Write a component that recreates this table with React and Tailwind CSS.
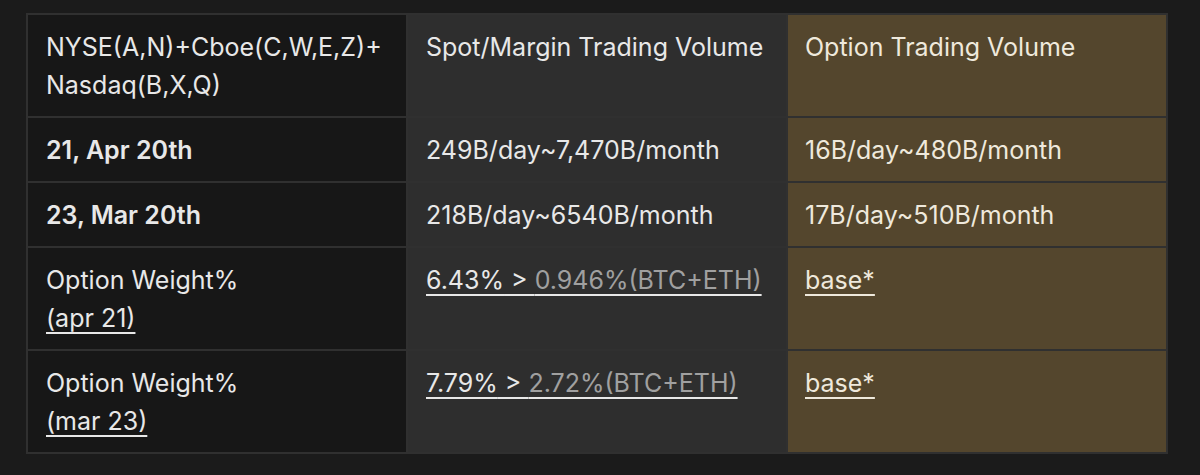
import React from 'react'

const rows = [
  {
    a: <>NYSE(A,N)+Cboe(C,W,E,Z)+<br />Nasdaq(B,X,Q)</>,
    b: 'Spot/Margin Trading Volume',
    c: 'Option Trading Volume',
  },
  {
    a: <span className="font-semibold">21, Apr 20th</span>,
    b: '249B/day~7,470B/month',
    c: '16B/day~480B/month',
  },
  {
    a: <span className="font-semibold">23, Mar 20th</span>,
    b: '218B/day~6540B/month',
    c: '17B/day~510B/month',
  },
  {
    a: <>Option Weight%<br /><span className="underline underline-offset-[5px] decoration-[1.5px]">(apr 21)</span></>,
    b: <Ratio big="6.43%" small="0.946%(BTC+ETH)" />,
    c: <span className="underline underline-offset-[5px] decoration-[1.5px]">base*</span>,
  },
  {
    a: <>Option Weight%<br /><span className="underline underline-offset-[5px] decoration-[1.5px]">(mar 23)</span></>,
    b: <Ratio big="7.79%" small="2.72%(BTC+ETH)" />,
    c: <span className="underline underline-offset-[5px] decoration-[1.5px]">base*</span>,
  },
]

function Ratio({ big, small }) {
  return (
    <span className="underline underline-offset-[5px] decoration-[1.5px]">
      {big} &gt; <span className="text-[#a0a0a0]">{small}</span>
    </span>
  )
}

export default function App() {
  return (
    <div className="min-h-screen bg-[#1b1b1b] pt-[13px] pl-[26px] font-['Inter','Liberation_Sans',sans-serif]">
      <div className="w-[1142px] bg-[#303030] p-[2px] grid grid-cols-3 gap-[2px] text-[25px] leading-[38px] text-[#e8e8e8]">
        {rows.map((r, i) => (
          <React.Fragment key={i}>
            <div className="bg-[#171717] px-[18px] pt-[13px] pb-[12px]">{r.a}</div>
            <div className="bg-[#2e2e2e] px-[18px] pt-[13px] pb-[12px]">{r.b}</div>
            <div className="bg-[#54462d] px-[17px] pt-[13px] pb-[12px] text-[#efe9dc]">{r.c}</div>
          </React.Fragment>
        ))}
      </div>
    </div>
  )
}
